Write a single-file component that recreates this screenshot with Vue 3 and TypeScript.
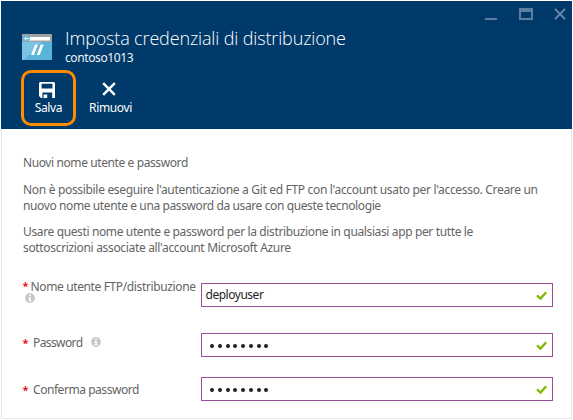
<script setup lang="ts">
interface Field {
  id: string
  label: string
  value: string
  secret: boolean
  info: boolean
}

const fields: Field[] = [
  { id: 'user', label: 'Nome utente FTP/distribuzione', value: 'deployuser', secret: false, info: true },
  { id: 'password', label: 'Password', value: '8', secret: true, info: true },
  { id: 'confirm', label: 'Conferma password', value: '8', secret: true, info: false },
]
</script>

<template>
  <section class="blade">
    <header class="head">
      <div class="window-controls">
        <svg width="12" height="12" viewBox="0 0 12 12" shape-rendering="crispEdges"><path d="M0 10h12v2H0z" /></svg>
        <svg width="14" height="12" viewBox="0 0 14 12" shape-rendering="crispEdges"><path fill-rule="evenodd" d="M0 0h14v12H0zM2 4v6h10V4z" /></svg>
        <svg class="close" width="12" height="12" viewBox="0 0 12 12"><path class="line" d="M1 1l10 10M11 1L1 11" /></svg>
      </div>
      <div class="heading">
        <svg class="app-icon" width="30" height="26" viewBox="0 0 30 26">
          <rect width="30" height="26" rx="1" fill="#59b4d9" />
          <path d="M0 8V1q0-1 1-1h28q1 0 1 1v7z" fill="#a0a1a2" />
          <path d="M0 8h20L2 26H1q-1 0-1-1z" fill="#7ac3e1" />
          <rect x="7" y="3" width="21" height="3.5" fill="#fff" />
          <circle cx="4.5" cy="4.6" r="3.3" fill="#59b4d9" />
          <path d="M7 4.6H2.7M4.5 2.8L2.7 4.6l1.8 1.8" fill="none" stroke="#fff" stroke-width="1" />
          <path d="M13 10.5h3L12 21H9zM18.7 10.5h3L17.7 21h-3z" fill="#fff" />
        </svg>
        <div class="titles">
          <h1>Imposta credenziali di distribuzione</h1>
          <p>contoso1013</p>
        </div>
      </div>
      <div class="commands">
        <button class="command highlighted">
          <svg width="16" height="16" viewBox="0 0 16 16"><path fill="#fff" fill-rule="evenodd" d="M1 0h14l1 1v15H2l-2-2V1zM2.6 1.8v4.7h10.8V1.8zM3.4 10.5V16h1.2v-3.6h3.6V16h5v-5.5z" /></svg>
          <span>Salva</span>
        </button>
        <button class="command remove">
          <svg width="16" height="16" viewBox="0 0 16 16"><path d="M2.2 2.2l11.6 11.6M13.8 2.2L2.2 13.8" stroke="#fff" stroke-width="2.4" /></svg>
          <span>Rimuovi</span>
        </button>
      </div>
    </header>

    <main class="body">
      <p class="l0">Nuovi nome utente e password</p>
      <p><span class="l1">Non è possibile eseguire l'autenticazione a Git ed FTP con l'account usato per l'accesso. Creare un</span><br /><span class="l2">nuovo nome utente e una password da usare con queste tecnologie</span></p>
      <p><span class="l3">Usare questi nome utente e password per la distribuzione in qualsiasi app per tutte le</span><br /><span class="l4">sottoscrizioni associate all'account Microsoft Azure</span></p>

      <form class="form">
        <div v-for="f in fields" :key="f.id" class="row" :class="f.id">
          <div class="label">
            <span class="star">*</span>
            <span class="name">{{ f.label }}</span>
            <svg v-if="f.info" class="info" width="10" height="10" viewBox="0 0 10 10">
              <circle cx="5" cy="5" r="4.9" fill="#c8c8c8" />
              <path d="M4.2 1.6h1.6v1.5H4.2zM3.6 4h2.2v3.3h.7v1H3.5v-1h.7V5h-.6z" fill="#fff" />
            </svg>
          </div>
          <div class="input">
            <span v-if="!f.secret" class="value">{{ f.value }}</span>
            <span v-else class="dots"><i v-for="n in Number(f.value)" :key="n"></i></span>
            <svg class="check" width="12" height="10" viewBox="0 0 12 10"><path d="M1 4.3L4.5 7.6 10.2 1.2" fill="none" stroke="#7fba00" stroke-width="2.3" /></svg>
          </div>
        </div>
      </form>
    </main>
  </section>
</template>

<style>
body {
  background: #fff;
}
</style>

<style scoped>
.blade {
  box-sizing: border-box;
  width: 571px;
  height: 418px;
  margin: 1px;
  font-family: 'Noto Sans', 'Open Sans', sans-serif;
  font-size: 12px;
  line-height: 16px;
  color: #646464;
  display: flex;
  flex-direction: column;
  white-space: nowrap;
}
h1,
p {
  margin: 0;
  font-weight: 400;
}
svg {
  display: block;
  flex: none;
}
.head {
  height: 128px;
  box-sizing: border-box;
  background: #003a6b;
  color: #fff;
}
.window-controls {
  display: flex;
  justify-content: flex-end;
  gap: 22px;
  padding: 7px 6px 0 0;
  height: 12px;
  fill: #5c7f9f;
}
.close {
  margin-left: -1px;
}
.line {
  stroke: #6585a2;
  stroke-width: 2;
}
.heading {
  display: flex;
  padding: 6px 0 0 21px;
  height: 38px;
}
.app-icon {
  margin-top: 8px;
}
.titles {
  margin-left: 13px;
}
h1 {
  font-family: 'Open Sans', 'Noto Sans', sans-serif;
  font-weight: 300;
  font-size: 18px;
  line-height: 24px;
  letter-spacing: -0.15px;
  color: #fff;
}
.titles p {
  line-height: 16px;
  letter-spacing: -0.4px;
  color: #f0f4f8;
}
.commands {
  display: flex;
  padding: 6px 0 0 20px;
}
.command {
  box-sizing: border-box;
  width: 55px;
  height: 56px;
  border: 3px solid transparent;
  border-radius: 10px;
  background: none;
  color: #fff;
  font: inherit;
  letter-spacing: -0.35px;
  display: flex;
  flex-direction: column;
  align-items: center;
  padding: 9px 0 0;
  gap: 2px;
}
.command svg {
  margin-left: -3px;
}
.highlighted {
  border-color: #ff8c00;
}
.remove {
  margin-left: 7px;
}
.remove svg {
  margin: -1px 0 1px -4px;
}
.body {
  flex: 1;
  box-sizing: border-box;
  border: 1px solid #e6e6e6;
  border-top: 0;
  padding: 26px 18px 0 21px;
}
.body p {
  margin-bottom: 10px;
}
.body .l0 {
  letter-spacing: -0.4px;
  margin-bottom: 11px;
}
.l1 {
  letter-spacing: -0.32px;
}
.l2 {
  letter-spacing: -0.39px;
}
.l3 {
  letter-spacing: -0.37px;
}
.l4 {
  letter-spacing: -0.33px;
}
.form {
  display: flex;
  flex-direction: column;
  margin-top: 27px;
}
.row {
  display: grid;
  grid-template-columns: 178px 352px;
  height: 24px;
}
.password {
  margin-top: 26px;
}
.confirm {
  margin-top: 20px;
}
.label {
  display: flex;
  flex-wrap: wrap;
  align-content: flex-start;
}
.user .label {
  margin-top: -4px;
}
.password .label {
  padding-top: 2px;
}
.confirm .label {
  padding-top: 5px;
}
.star {
  width: 6px;
  margin: -1px 0 1px -0.5px;
  color: #e81123;
  font-weight: 700;
  font-size: 11px;
}
.password .star,
.confirm .star {
  margin-top: 0;
}
.name {
  margin-left: 2px;
  letter-spacing: -0.37px;
}
.password .name,
.confirm .name {
  margin-left: 4.5px;
  letter-spacing: -0.6px;
}
.confirm .name {
  letter-spacing: -0.45px;
}
.password .info {
  margin: 2px 0 0 9px;
}
.user .info {
  margin: -2px 0 0 2px;
}
.input {
  box-sizing: border-box;
  border: 1px solid #9b4f96;
  display: flex;
  align-items: center;
  justify-content: space-between;
  padding: 0 4px 0 4px;
  height: 24px;
  color: #1e1e1e;
}
.value {
  margin-top: -1px;
  margin-left: -0.5px;
  letter-spacing: -0.48px;
}
.dots {
  display: flex;
  gap: 3.75px;
  padding: 2px 0 0 4px;
}
.dots i {
  width: 4px;
  height: 4px;
  border-radius: 50%;
  background: #1e1e1e;
}
.check {
  margin-top: 1px;
}
</style>
